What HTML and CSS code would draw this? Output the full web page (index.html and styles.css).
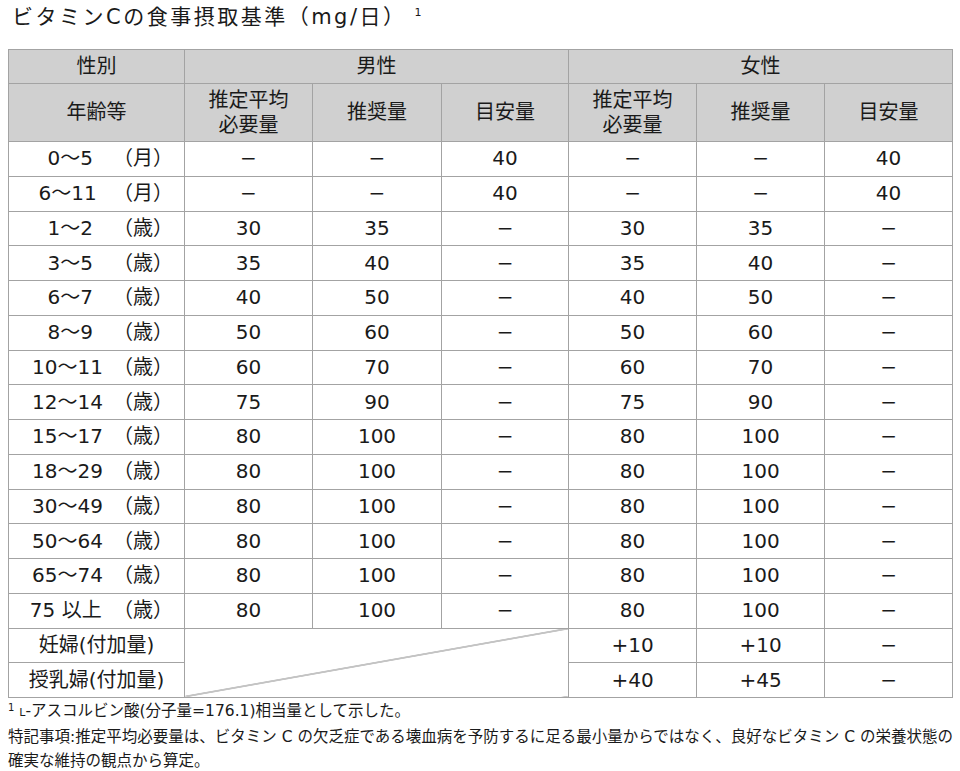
FILE: index.html
```html
<!DOCTYPE html>
<html lang="ja">
<head>
<meta charset="utf-8">
<title>ビタミンCの食事摂取基準</title>
<link rel="stylesheet" href="styles.css">
</head>
<body>
<div class="page">
  <h1 class="title">ビタミンCの食事摂取基準（mg/日）<sup class="title-sup">1</sup></h1>
  <table class="intake">
    <colgroup>
      <col class="c-age"><col class="c1"><col class="c2"><col class="c3"><col class="c4"><col class="c5"><col class="c6">
    </colgroup>
    <thead>
      <tr class="h1row">
        <th>性別</th>
        <th colspan="3">男性</th>
        <th colspan="3">女性</th>
      </tr>
      <tr class="h2row">
        <th>年齢等</th>
        <th>推定平均<br>必要量</th>
        <th>推奨量</th>
        <th>目安量</th>
        <th>推定平均<br>必要量</th>
        <th>推奨量</th>
        <th>目安量</th>
      </tr>
    </thead>
    <tbody>
      <tr><td class="age">0～5　<span class="unit">（月）</span></td><td>−</td><td>−</td><td>40</td><td>−</td><td>−</td><td>40</td></tr>
      <tr><td class="age">6～11 <span class="unit">（月）</span></td><td>−</td><td>−</td><td>40</td><td>−</td><td>−</td><td>40</td></tr>
      <tr><td class="age">1～2　<span class="unit">（歳）</span></td><td>30</td><td>35</td><td>−</td><td>30</td><td>35</td><td>−</td></tr>
      <tr><td class="age">3～5　<span class="unit">（歳）</span></td><td>35</td><td>40</td><td>−</td><td>35</td><td>40</td><td>−</td></tr>
      <tr><td class="age">6～7　<span class="unit">（歳）</span></td><td>40</td><td>50</td><td>−</td><td>40</td><td>50</td><td>−</td></tr>
      <tr><td class="age">8～9　<span class="unit">（歳）</span></td><td>50</td><td>60</td><td>−</td><td>50</td><td>60</td><td>−</td></tr>
      <tr><td class="age">10～11<span class="unit">（歳）</span></td><td>60</td><td>70</td><td>−</td><td>60</td><td>70</td><td>−</td></tr>
      <tr><td class="age">12～14<span class="unit">（歳）</span></td><td>75</td><td>90</td><td>−</td><td>75</td><td>90</td><td>−</td></tr>
      <tr><td class="age">15～17<span class="unit">（歳）</span></td><td>80</td><td>100</td><td>−</td><td>80</td><td>100</td><td>−</td></tr>
      <tr><td class="age">18～29<span class="unit">（歳）</span></td><td>80</td><td>100</td><td>−</td><td>80</td><td>100</td><td>−</td></tr>
      <tr><td class="age">30～49<span class="unit">（歳）</span></td><td>80</td><td>100</td><td>−</td><td>80</td><td>100</td><td>−</td></tr>
      <tr><td class="age">50～64<span class="unit">（歳）</span></td><td>80</td><td>100</td><td>−</td><td>80</td><td>100</td><td>−</td></tr>
      <tr><td class="age">65～74<span class="unit">（歳）</span></td><td>80</td><td>100</td><td>−</td><td>80</td><td>100</td><td>−</td></tr>
      <tr><td class="age">75 以上 <span class="unit unit-tight">（歳）</span></td><td>80</td><td>100</td><td>−</td><td>80</td><td>100</td><td>−</td></tr>
      <tr><td class="extra">妊婦(付加量)</td><td class="diag" colspan="3" rowspan="2"></td><td>+10</td><td>+10</td><td>−</td></tr>
      <tr><td class="extra">授乳婦(付加量)</td><td>+40</td><td>+45</td><td>−</td></tr>
    </tbody>
  </table>
  <div class="notes">
    <p class="note"><sup class="note-sup">1</sup> <span class="sc">L</span>-アスコルビン酸(分子量=176.1)相当量として示した。</p>
    <p class="note">特記事項:推定平均必要量は、ビタミン C の欠乏症である壊血病を予防するに足る最小量からではなく、良好なビタミン C の栄養状態の</p>
    <p class="note">確実な維持の観点から算定。</p>
  </div>
</div>
</body>
</html>
```
FILE: styles.css
```css
html, body {
  margin: 0;
  padding: 0;
  background: #ffffff;
}
body {
  font-family: "DejaVu Sans", "Noto Sans CJK JP", sans-serif;
  color: #1a1a1a;
}
.page {
  padding: 2px 8px 0 8px;
}
.title {
  margin: 0 0 17px 4px;
  font-size: 21px;
  font-weight: 400;
  line-height: 30px;
  letter-spacing: 2.5px;
  white-space: nowrap;
}
.title-sup {
  font-size: 11px;
  vertical-align: top;
  position: relative;
  top: -4px;
  margin-left: 8px;
}
.intake {
  width: 944px;
  border-collapse: collapse;
  table-layout: fixed;
  font-size: 20px;
}
.c-age { width: 176px; }
.c1 { width: 128px; }
.c2 { width: 129px; }
.c3 { width: 127px; }
.c4 { width: 128px; }
.c5 { width: 128px; }
.c6 { width: 128px; }
.intake th,
.intake td {
  border: 1px solid #a3a3a3;
  padding: 0;
  text-align: center;
  vertical-align: middle;
  font-weight: 400;
  line-height: 25px;
}
.intake th {
  background: #d0d0d0;
}
.h1row { height: 34px; }
.h2row { height: 58px; }
.intake tbody tr { height: 34.75px; }
.intake td.age {
  text-align: right;
  padding-right: 11px;
  white-space: pre;
}
.unit {
  margin-left: 10px;
}
.unit.unit-tight {
  margin-left: 5px;
}
.intake td.diag {
  background: linear-gradient(to bottom right,
    transparent calc(50% - 0.8px),
    #8a8a8a calc(50% - 0.2px),
    #8a8a8a calc(50% + 0.2px),
    transparent calc(50% + 0.8px));
}
.notes {
  padding-top: 1px;
}
.note {
  margin: 0;
  font-size: 15.5px;
  line-height: 24px;
  white-space: nowrap;
}
.note-sup {
  font-size: 10px;
  vertical-align: top;
  position: relative;
  top: -3px;
}
.sc {
  font-size: 11px;
}
```
